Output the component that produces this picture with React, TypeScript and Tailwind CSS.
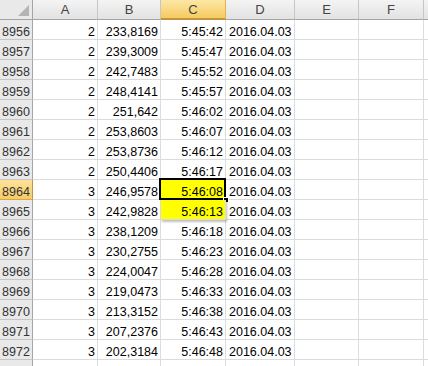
import React from "react"

type Row = { n: number; a: string; b: string; c: string; d: string; hl?: boolean; active?: boolean }

const rows: Row[] = [
  { n: 8956, a: "2", b: "233,8169", c: "5:45:42", d: "2016.04.03" },
  { n: 8957, a: "2", b: "239,3009", c: "5:45:47", d: "2016.04.03" },
  { n: 8958, a: "2", b: "242,7483", c: "5:45:52", d: "2016.04.03" },
  { n: 8959, a: "2", b: "248,4141", c: "5:45:57", d: "2016.04.03" },
  { n: 8960, a: "2", b: "251,642", c: "5:46:02", d: "2016.04.03" },
  { n: 8961, a: "2", b: "253,8603", c: "5:46:07", d: "2016.04.03" },
  { n: 8962, a: "2", b: "253,8736", c: "5:46:12", d: "2016.04.03" },
  { n: 8963, a: "2", b: "250,4406", c: "5:46:17", d: "2016.04.03" },
  { n: 8964, a: "3", b: "246,9578", c: "5:46:08", d: "2016.04.03", hl: true, active: true },
  { n: 8965, a: "3", b: "242,9828", c: "5:46:13", d: "2016.04.03", hl: true },
  { n: 8966, a: "3", b: "238,1209", c: "5:46:18", d: "2016.04.03" },
  { n: 8967, a: "3", b: "230,2755", c: "5:46:23", d: "2016.04.03" },
  { n: 8968, a: "3", b: "224,0047", c: "5:46:28", d: "2016.04.03" },
  { n: 8969, a: "3", b: "219,0473", c: "5:46:33", d: "2016.04.03" },
  { n: 8970, a: "3", b: "213,3152", c: "5:46:38", d: "2016.04.03" },
  { n: 8971, a: "3", b: "207,2376", c: "5:46:43", d: "2016.04.03" },
  { n: 8972, a: "3", b: "202,3184", c: "5:46:48", d: "2016.04.03" },
]

const cell = "h-[20px] shrink-0 border-r border-b border-[#dadcdd] flex items-end pb-[1px]"

export default function App() {
  return (
    <div className="w-[428px] h-[366px] overflow-hidden bg-white font-['Liberation_Sans',Arial,sans-serif] text-[12.5px] leading-none text-black">
      {/* Column headers */}
      <div className="flex">
        <div className="relative w-[33px] h-[20px] shrink-0 bg-[#e9e9e9] border-r border-b border-[#a5a5a5]">
          <svg className="absolute right-[3px] bottom-[3px]" width="11" height="11" viewBox="0 0 11 11">
            <polygon points="11,0 11,11 0,11" fill="#b4b4b4" />
          </svg>
        </div>
        {[
          ["A", "w-[65px]"],
          ["B", "w-[63px]"],
          ["C", "w-[65px]"],
          ["D", "w-[69px]"],
          ["E", "w-[64px]"],
          ["F", "w-[65px]"],
          ["", "w-[20px]"],
        ].map(([l, w]) =>
          l === "C" ? (
            <div
              key={l}
              className={`${w} h-[20px] shrink-0 flex items-center justify-center bg-gradient-to-b from-[#fce7a6] to-[#f6cb5c] border-r border-[#e3b24f] border-b-2 border-b-[#c29443] text-[#444] text-[13px]`}
            >
              {l}
            </div>
          ) : (
            <div
              key={l || "g"}
              className={`${w} h-[20px] shrink-0 flex items-center justify-center bg-gradient-to-b from-[#f4f4f4] to-[#e2e2e2] border-r border-[#c6c6c6] border-b border-b-[#a5a5a5] text-[#444] text-[13px]`}
            >
              {l}
            </div>
          )
        )}
      </div>

      {rows.map((r) => (
        <div key={r.n} className="flex">
          <div
            className={`w-[33px] h-[20px] shrink-0 flex items-end pb-[1px] justify-center border-r border-b ${
              r.active
                ? "bg-gradient-to-b from-[#fde29a] to-[#f7cc66] border-[#d9a844] border-r-[#c29443] text-[#333]"
                : "bg-[#e9e9e9] border-[#c6c6c6] border-r-[#a5a5a5] text-[#333]"
            }`}
          >
            {r.n}
          </div>
          <div className={`${cell} w-[65px] justify-end pr-[2px]`}>{r.a}</div>
          <div className={`${cell} w-[63px] justify-end pr-[2px]`}>{r.b}</div>
          <div
            className={`${cell} relative w-[65px] justify-end pr-[2px] ${
              r.hl ? "bg-[#ffff00]" : ""
            } ${r.hl && !r.active ? "shadow-[1px_2px_2px_rgba(0,0,0,0.25)] z-10" : ""}`}
          >
            {r.c}
            {r.active && (
              <>
                <div className="absolute -left-[2px] -top-[2px] w-[67px] h-[22px] border-2 border-black" />
                <div className="absolute -right-[4px] -bottom-[4px] w-[6px] h-[6px] bg-black border border-white" />
              </>
            )}
          </div>
          <div className={`${cell} w-[69px] pl-[3px]`}>{r.d}</div>
          <div className={`${cell} w-[64px]`} />
          <div className={`${cell} w-[65px]`} />
          <div className={`${cell} w-[20px]`} />
        </div>
      ))}

      <div className="flex">
        <div className="w-[33px] h-[20px] shrink-0 bg-[#e9e9e9] border-r border-[#a5a5a5]" />
        {["w-[65px]", "w-[63px]", "w-[65px]", "w-[69px]", "w-[64px]", "w-[65px]", "w-[20px]"].map((w, i) => (
          <div key={i} className={`${w} h-[20px] shrink-0 border-r border-[#dadcdd]`} />
        ))}
      </div>
    </div>
  )
}
